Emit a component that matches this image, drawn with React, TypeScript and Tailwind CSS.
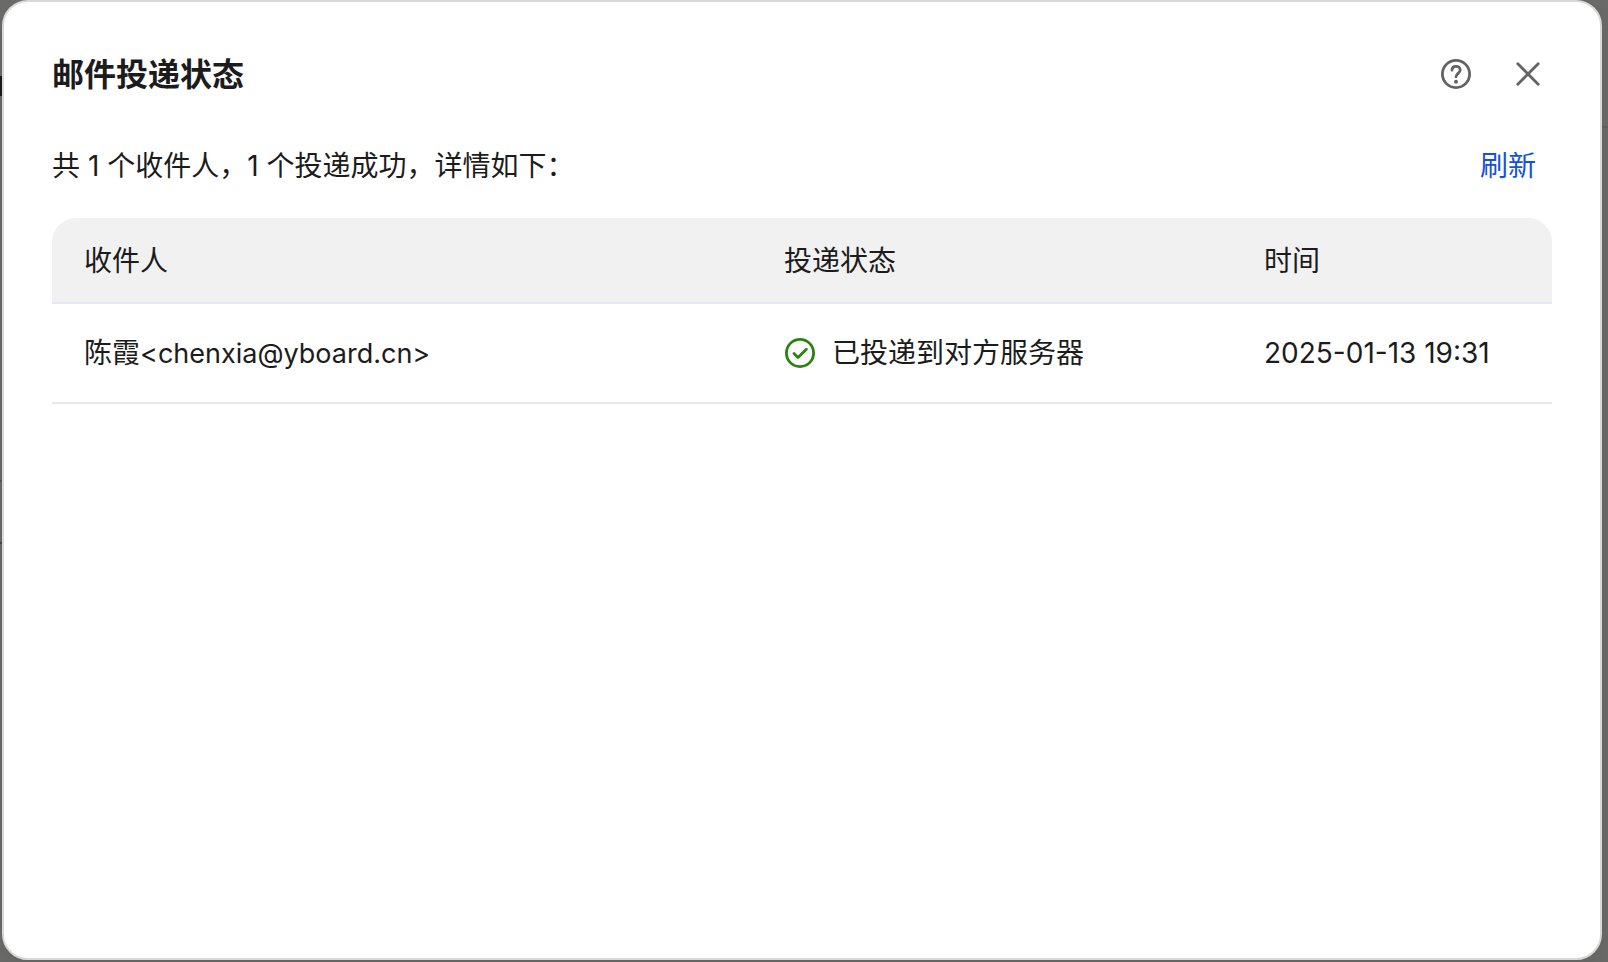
const recipients = [
  { name: "陈霞", email: "chenxia@yboard.cn", status: "已投递到对方服务器", time: "2025-01-13 19:31" },
];

function HelpIcon() {
  return (
    <svg viewBox="0 0 32 32" className="size-8" fill="none" stroke="currentColor" strokeWidth="2.8" strokeLinecap="round" strokeLinejoin="round" aria-hidden="true">
      <circle cx="16" cy="16" r="13.6" />
      <path d="M12 12.2C12 9.8 13.7 8.3 16 8.3S20.2 9.9 20.2 12.1C20.2 15.2 16 15.6 16 18.8" />
      <circle cx="16" cy="23.7" r="2" fill="currentColor" stroke="none" />
    </svg>
  );
}

function CloseIcon() {
  return (
    <svg viewBox="0 0 32 32" className="size-8" fill="none" stroke="currentColor" strokeWidth="2.8" strokeLinecap="round" aria-hidden="true">
      <path d="M5.8 5.8 26.2 26.2M26.2 5.8 5.8 26.2" />
    </svg>
  );
}

function CheckIcon() {
  return (
    <svg viewBox="0 0 32 32" className="size-8 shrink-0 text-[#2b8210]" fill="none" stroke="currentColor" strokeWidth="2.8" strokeLinecap="round" strokeLinejoin="round" aria-hidden="true">
      <circle cx="16" cy="16" r="13.6" />
      <path d="m10 16.6 4 4 8.4-8.4" />
    </svg>
  );
}

/* Dimmed page that shows around the dialog */
function Backdrop() {
  return (
    <div aria-hidden="true" className="absolute inset-0 bg-[#6b6b69]">
      <div className="absolute top-[76px] left-0 h-[20px] w-[2px] bg-[#1c1c1c]" />
      <div className="absolute top-[126px] right-0 h-[2px] w-[6px] bg-[#626261]" />
      <div className="absolute top-[480px] left-0 h-[2px] w-[2px] bg-[#5a5a59]" />
      <div className="absolute top-[542px] left-0 h-[2px] w-[2px] bg-[#484847]" />
    </div>
  );
}

export default function App() {
  return (
    <div className="relative flex min-h-screen pr-[6px] pb-[2px] pl-[2px] font-['Inter','Noto_Sans_CJK_SC',sans-serif] text-[28px] leading-10 text-[#1c1c1c]">
      <Backdrop />
      <section role="dialog" aria-labelledby="dialog-title" className="relative flex-1 rounded-[26px] border-2 border-[#d9d9d9] bg-white px-12 pt-12 shadow-[0_8px_24px_rgba(0,0,0,0.08)]">
        <header className="flex items-center justify-between pr-2">
          <h1 id="dialog-title" className="pt-[2px] text-[32px] leading-[46px] font-bold">邮件投递状态</h1>
          <div className="flex gap-10 text-[#636363]">
            <button type="button" aria-label="帮助"><HelpIcon /></button>
            <button type="button" aria-label="关闭"><CloseIcon /></button>
          </div>
        </header>
        <div className="mt-12 flex items-center justify-between pr-4">
          <p>共 1 个收件人，1 个投递成功，详情如下：</p>
          <button type="button" className="text-[#1450d8]">刷新</button>
        </div>
        <table className="mt-8 w-full table-fixed border-separate border-spacing-0 text-left">
          <colgroup>
            <col />
            <col className="w-[32%]" />
            <col className="w-80" />
          </colgroup>
          <thead>
            <tr className="h-[86px]">
              <th className="rounded-tl-3xl border-b-2 border-[#e5e8f2] bg-[#f1f1f1] px-8 pt-[2px] font-normal">收件人</th>
              <th className="border-b-2 border-[#e5e8f2] bg-[#f1f1f1] px-8 pt-[2px] font-normal">投递状态</th>
              <th className="rounded-tr-3xl border-b-2 border-[#e5e8f2] bg-[#f1f1f1] px-8 pt-[2px] font-normal">时间</th>
            </tr>
          </thead>
          <tbody>
            {recipients.map((r) => (
              <tr key={r.email} className="h-[100px]">
                <td className="border-b-2 border-[#e5e8f2] px-8">
                  {r.name}
                  <span className="text-[27px]">&lt;{r.email}&gt;</span>
                </td>
                <td className="border-b-2 border-[#e5e8f2] px-8">
                  <span className="flex items-center gap-4"><CheckIcon />{r.status}</span>
                </td>
                <td className="border-b-2 border-[#e5e8f2] pl-8 whitespace-nowrap">{r.time}</td>
              </tr>
            ))}
          </tbody>
        </table>
      </section>
    </div>
  );
}
